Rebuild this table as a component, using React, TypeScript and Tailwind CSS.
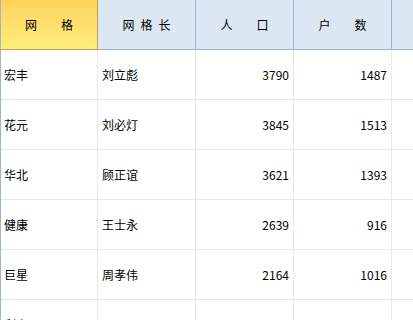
import React from "react";

const rows = [
  ["宏丰", "刘立彪", "3790", "1487"],
  ["花元", "刘必灯", "3845", "1513"],
  ["华北", "顾正谊", "3621", "1393"],
  ["健康", "王士永", "2639", "916"],
  ["巨星", "周孝伟", "2164", "1016"],
  ["利上", "", "", ""],
];

export default function App() {
  return (
    <div
      className="w-[413px] h-[320px] overflow-hidden bg-white border-l border-[#9fb4cd] text-[12px] text-black"
      style={{ fontFamily: '"Noto Sans CJK SC", "Noto Sans", sans-serif' }}
    >
      <div className="grid grid-cols-[97px_98px_98px_98px_1fr]">
        <div className="h-[50px] flex items-center justify-center border-r border-b border-[#d49a38] bg-gradient-to-b from-[#ffd45a] to-[#ffed7c]">
          <span className="w-[48px] flex justify-between"><span>网</span><span>格</span></span>
        </div>
        <div className="h-[50px] flex items-center justify-center border-r border-b border-[#9fb4cd] bg-[#dce7f4]">
          <span className="w-[48px] flex justify-between"><span>网</span><span>格</span><span>长</span></span>
        </div>
        <div className="h-[50px] flex items-center justify-center border-r border-b border-[#9fb4cd] bg-[#dce7f4]">
          <span className="w-[48px] flex justify-between"><span>人</span><span>口</span></span>
        </div>
        <div className="h-[50px] flex items-center justify-center border-r border-b border-[#9fb4cd] bg-[#dce7f4]">
          <span className="w-[48px] flex justify-between"><span>户</span><span>数</span></span>
        </div>
        <div className="h-[50px] border-b border-[#9fb4cd] bg-[#dce7f4]" />
        {rows.map((r, i) => (
          <React.Fragment key={i}>
            <div className="h-[50px] flex items-center pl-[3px] border-r border-b border-[#e9e9e9]">{r[0]}</div>
            <div className="h-[50px] flex items-center pl-[4px] border-r border-b border-[#e9e9e9]">{r[1]}</div>
            <div className="h-[50px] flex items-center justify-end pr-[4px] border-r border-b border-[#e9e9e9]">{r[2]}</div>
            <div className="h-[50px] flex items-center justify-end pr-[4px] border-r border-b border-[#e9e9e9]">{r[3]}</div>
            <div className="h-[50px] border-b border-[#e9e9e9]" />
          </React.Fragment>
        ))}
      </div>
    </div>
  );
}
